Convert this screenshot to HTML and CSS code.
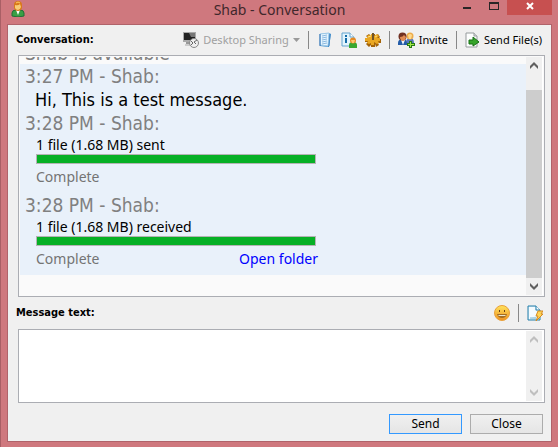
FILE: index.html
```html
<!DOCTYPE html>
<html lang="en">
<head>
<meta charset="utf-8">
<title>Shab - Conversation</title>
<link rel="stylesheet" href="styles.css">
</head>
<body>
<div class="window">
  <header class="titlebar">
    <svg class="app-icon" width="16" height="16" viewBox="0 0 16 16" aria-hidden="true">
      <path d="M2 15V12Q2 9 6 9H10Q14 9 14 12V15Q8 17 2 15Z" fill="#39a045" stroke="#216e37"/>
      <path d="M6 9L8 14L10 9Z" fill="#fff"/>
      <path d="M4 4Q4 0 8 0Q12 0 12 4V7Q11 10 8 10Q5 10 4 7Z" fill="#d9791a"/>
      <path d="M5 4Q8 5 10 3L11 6Q10 9 8 9Q6 9 5 7Z" fill="#f8cb76"/>
      <path d="M6 2Q8 0 10 2" fill="none" stroke="#ffca62"/>
    </svg>
    <h1 class="title">Shab - Conversation</h1>
    <div class="caption-buttons">
      <button class="caption" type="button" aria-label="Minimize"><svg width="10" height="12" viewBox="0 0 10 12"><path d="M1 8H9" stroke="#292526" stroke-width="2"/></svg></button>
      <button class="caption" type="button" aria-label="Maximize"><svg width="10" height="12" viewBox="0 0 10 12"><path d="M0 2H10V10H0ZM1 4V9H9V4Z" fill="#292526" fill-rule="evenodd"/></svg></button>
      <button class="caption caption-close" type="button" aria-label="Close window"><svg width="8" height="8" viewBox="0 0 8 8"><path d="M1 1L7 7M7 1L1 7" stroke="#fff" stroke-width="2"/></svg></button>
    </div>
  </header>
  <main class="client">
    <div class="toolbar">
      <h2 class="label">Conversation:</h2>
      <div class="tools">
        <button class="tool" type="button" disabled>
          <svg width="16" height="16" viewBox="0 0 16 16"><path d="M0 0H13V10H0Z" fill="#aaa"/><path d="M1 1H12V8H1Z" fill="#222"/><path d="M6 1H12V5H8Z" fill="#777"/><path d="M3 10H8V12H3Z" fill="#999"/><path d="M2 12H9V14H2Z" fill="#ccc"/><circle cx="11" cy="11" r="4.5" fill="#eee" stroke="#888"/><path d="M8 9L10 11L8 13M14 8L11 10L13 12" fill="none" stroke="#666"/></svg>
          <span>Desktop Sharing</span>
          <svg width="7" height="4" viewBox="0 0 7 4"><path d="M0 0H7L3.5 4Z" fill="#999"/></svg>
        </button>
        <span class="rule"></span>
        <button class="tool tool-icon" type="button" aria-label="History">
          <svg width="16" height="16" viewBox="0 0 16 16"><path d="M3 2L12 1L14 2L12 15L3 14Z" fill="#3889ca"/><path d="M3 2L12 1L11 14L3 13Z" fill="#e5f5ff" stroke="#9bc8e8"/><path d="M5 4L10 3M5 6L10 5M5 8L10 7M5 10L10 9M5 12L10 11" stroke="#8ab8df"/><path d="M2 3H4M2 5H4M2 7H4M2 9H4M2 11H4M2 13H4" stroke="#2467ab"/><path d="M13 2L12 14" stroke="#4c8fca"/></svg>
        </button>
        <button class="tool tool-icon" type="button" aria-label="Contact information">
          <svg width="16" height="16" viewBox="0 0 16 16"><path d="M1 1H9L13 5V14H1Z" fill="#e3f4fc" stroke="#65a4cf"/><path d="M9 1V5H13" fill="#fff" stroke="#65a4cf"/><path d="M4 3H6V5H4ZM4 6H6V11H4Z" fill="#146ca8"/><path d="M8 16V13Q8 10 12 10Q16 10 16 13V16Z" fill="#39a72f"/><circle cx="12" cy="8.5" r="3" fill="#e68a22"/><path d="M10 8H14L13 11H11Z" fill="#ffc66e"/></svg>
        </button>
        <button class="tool tool-icon" type="button" aria-label="Options">
          <svg width="16" height="16" viewBox="0 0 16 16"><path d="M6 2H10V4L13 2L15 5L13 7H16V11H13L14 13L11 15L10 12V15H6V13L4 15L1 12L3 10H0V6H3L1 4L4 2L6 4Z" fill="#a56408"/><path d="M6 2H9V4L12 2L14 4L12 6H15V9H13L14 11L12 12L9 10V13H6V11L4 12L2 11L3 9H0V6H3L2 4L4 3L6 4Z" fill="#eaa722"/><path d="M7 1H9V8H7Z" fill="#6e5329"/><path d="M3 5L6 4M10 5L12 4" stroke="#ffe077"/></svg>
        </button>
        <span class="rule"></span>
        <button class="tool" type="button">
          <svg width="17" height="16" viewBox="0 0 17 16"><path d="M8 11Q8 6 12 6Q16 6 16 11V13H8Z" fill="#5878bd"/><circle cx="12" cy="4" r="3.5" fill="#edac4b"/><path d="M10 3Q12 1 14 3L13 7H11Z" fill="#ffda8c"/><path d="M0 13V11Q0 7 5 7Q9 7 9 12V13Z" fill="#245ca8"/><path d="M3 8L5 13L7 8Z" fill="#f1f5fa"/><circle cx="4.5" cy="4.5" r="4" fill="#713122"/><path d="M2 5Q5 5 6 3L8 5Q7 9 5 9Q2 8 2 5Z" fill="#e18b54"/><path d="M11 9H14V11H17V14H14V16H11V14H9V11H11Z" fill="#287b15"/><path d="M12 10H13V12H16V13H13V15H12V13H10V12H12Z" fill="#a4e84a"/></svg>
          <span>Invite</span>
        </button>
        <span class="rule"></span>
        <button class="tool" type="button">
          <svg width="15" height="16" viewBox="0 0 15 16"><path d="M1 1H9L12 4V15H1Z" fill="#fcfdfd" stroke="#969b9d"/><path d="M9 1V4H12" fill="#ddd" stroke="#969b9d"/><path d="M4 8H8V5L14 10L8 14V12H4Z" fill="#36a42a" stroke="#187014"/></svg>
          <span>Send File(s)</span>
        </button>
      </div>
    </div>

    <section class="log" aria-label="Conversation">
      <div class="log-view">
        <p class="status">Shab is available</p>
        <article class="message">
          <h3 class="sender">3:27 PM - Shab:</h3>
          <p class="text">Hi, This is a test message.</p>
        </article>
        <article class="message">
          <h3 class="sender">3:28 PM - Shab:</h3>
          <div class="transfer">
            <p class="file">1 file (1.68 MB) sent</p>
            <div class="bar" role="progressbar" aria-valuenow="100" aria-label="File sent"></div>
            <div class="result"><span>Complete</span></div>
          </div>
        </article>
        <article class="message">
          <h3 class="sender">3:28 PM - Shab:</h3>
          <div class="transfer">
            <p class="file">1 file (1.68 MB) received</p>
            <div class="bar" role="progressbar" aria-valuenow="100" aria-label="File received"></div>
            <div class="result"><span>Complete</span><a href="#">Open folder</a></div>
          </div>
        </article>
      </div>
      <div class="scroll">
        <button class="arrow" type="button" aria-label="Scroll up"><svg width="8" height="7" viewBox="0 0 8 7"><path d="M0 4L4 0L8 4V7L4 3L0 7Z" fill="currentColor"/></svg></button>
        <span class="thumb"></span>
        <button class="arrow" type="button" aria-label="Scroll down"><svg width="8" height="7" viewBox="0 0 8 7"><path d="M0 0L4 4L8 0V3L4 7L0 3Z" fill="currentColor"/></svg></button>
      </div>
    </section>

    <div class="compose-bar">
      <label class="label" for="message">Message text:</label>
      <div class="tools compose-tools">
        <button class="tool tool-icon" type="button" aria-label="Insert emoticon">
          <svg width="16" height="16" viewBox="0 0 16 16"><defs><linearGradient id="face" x2="0" y2="1"><stop stop-color="#ffe45c"/><stop offset="1" stop-color="#ee9021"/></linearGradient></defs><circle cx="8" cy="8" r="7.5" fill="url(#face)" stroke="#e9a13a"/><path d="M5 5H6V7H5ZM10 5H11V7H10Z" fill="#653e16"/><path d="M3 9H13Q12 13 8 13Q4 13 3 9Z" fill="#a56d22"/><path d="M4 10H12L11 11H5Z" fill="#eee6c8"/></svg>
        </button>
        <span class="rule"></span>
        <button class="tool tool-icon" type="button" aria-label="Quick message">
          <svg width="16" height="16" viewBox="0 0 16 16"><path d="M1 1H9L13 5V15H1Z" fill="#d6edf7" stroke="#247eaa"/><path d="M2 2H8V6H12V10L2 14Z" fill="#f4fbff"/><path d="M9 1V5H13" fill="#fff" stroke="#247eaa"/><path d="M3 13H9" stroke="#7bb8d6"/><path d="M11 6H16L14 9H16L9 16L11 11H9Z" fill="#ffd557" stroke="#d58b22"/></svg>
        </button>
      </div>
    </div>

    <div class="editor">
      <textarea id="message" class="input"></textarea>
      <div class="scroll scroll-idle">
        <button class="arrow" type="button" aria-label="Scroll message up" disabled><svg width="8" height="7" viewBox="0 0 8 7"><path d="M0 4L4 0L8 4V7L4 3L0 7Z" fill="currentColor"/></svg></button>
        <button class="arrow" type="button" aria-label="Scroll message down" disabled><svg width="8" height="7" viewBox="0 0 8 7"><path d="M0 0L4 4L8 0V3L4 7L0 3Z" fill="currentColor"/></svg></button>
      </div>
    </div>

    <footer class="actions">
      <button class="push push-default" type="button">Send</button>
      <button class="push" type="button">Close</button>
    </footer>
  </main>
</div>
</body>
</html>
```
FILE: styles.css
```css
* { box-sizing: border-box; }

body {
  margin: 0;
  font: 12px/16px "Noto Sans", Tahoma, sans-serif;
  color: #000;
}

h1, h2, h3, p { margin: 0; font-weight: normal; }

button {
  padding: 0;
  border: 0;
  background: none;
  font: inherit;
  color: inherit;
}

svg { display: block; flex: none; }

.window {
  display: flex;
  flex-direction: column;
  height: 100vh;
  padding: 0 6px 5px;
  border-left: 1px solid #a95f65;
  background: #cf787e;
}

.titlebar {
  display: grid;
  grid-template-columns: 1fr auto 1fr;
  align-items: start;
  height: 24px;
}

.app-icon { margin: 1px 0 0 3px; }

.title {
  font: 14px/20px "Noto Sans", sans-serif;
  color: #40272b;
}

.caption-buttons { display: flex; justify-content: flex-end; }

.caption {
  display: flex;
  align-items: center;
  justify-content: center;
  width: 27px;
  height: 12px;
}

.caption-close { width: 45px; height: 15px; background: #c75050; padding-bottom: 4px; }

.client {
  flex: 1;
  min-height: 0;
  display: flex;
  flex-direction: column;
  border: 1px solid #b0636a;
  background: #f0f0f0;
  padding: 0 6px 7px 8px;
}

.toolbar, .compose-bar {
  display: flex;
  flex: none;
  align-items: center;
  justify-content: space-between;
}

.toolbar { height: 30px; }
.compose-bar { height: 32px; }

.label { font: bold 11px/16px "DejaVu Sans Condensed", Tahoma, sans-serif; }

.tools { display: flex; align-items: center; gap: 8px; padding-right: 3px; }
.compose-tools { padding-right: 2px; }

.tool { display: flex; align-items: center; gap: 4px; font-size: 11px; white-space: nowrap; }
.tool:disabled { color: #a0a0a0; }

.rule { width: 1px; height: 18px; background: #888; }

.log, .editor {
  display: flex;
  margin: 0 0 0 2px;
  border: 1px solid #abadb3;
  background: #fff;
  padding: 1px;
}

.log { flex: 1 1 0; min-height: 0; background: #fafafa; }

.log-view {
  flex: 1;
  display: flex;
  flex-direction: column;
  justify-content: flex-end;
  overflow: hidden;
  padding-bottom: 20px;
}

.status, .sender, .text {
  font-family: "DejaVu Sans Condensed", Tahoma, sans-serif;
  font-size: 19px;
  line-height: 25px;
}

.status, .sender { padding-left: 5px; color: #808080; }
.status { line-height: 22px; }
.text { padding-left: 15px; font-size: 18px; line-height: 22px; }

.message { flex: none; background: #e9f1fa; }

.transfer { width: 298px; padding-left: 16px; font-size: 14px; }
.file { line-height: 18px; }

.bar {
  height: 10px;
  margin-right: 2px;
  border: 1px solid #b4b4b4;
  background: #06b025;
}

.result {
  display: flex;
  justify-content: space-between;
  height: 29px;
  line-height: 26px;
  color: #747474;
}

.result a { color: #00f; text-decoration: none; }

.scroll {
  display: flex;
  flex-direction: column;
  width: 17px;
  background: #f0f0f0;
  border-right: 1px solid #fff;
  color: #606060;
}

.scroll-idle { justify-content: space-between; color: #bfbfbf; }

.arrow {
  display: flex;
  align-items: center;
  justify-content: center;
  height: 17px;
}

.thumb { flex: 1; margin-top: 16px; background: #cdcdcd; }

.editor { flex: none; height: 74px; }

.input {
  flex: 1;
  border: 0;
  padding: 2px;
  resize: none;
  outline: 0;
  background: #fff;
  font: inherit;
}

.actions {
  display: flex;
  flex: none;
  justify-content: flex-end;
  gap: 8px;
  padding: 11px 2px 0 0;
}

.push {
  width: 73px;
  height: 20px;
  border: 1px solid #acacac;
  background: linear-gradient(#f0f0f0, #e5e5e5);
}

.push-default { border-color: #3399ff; }
```
